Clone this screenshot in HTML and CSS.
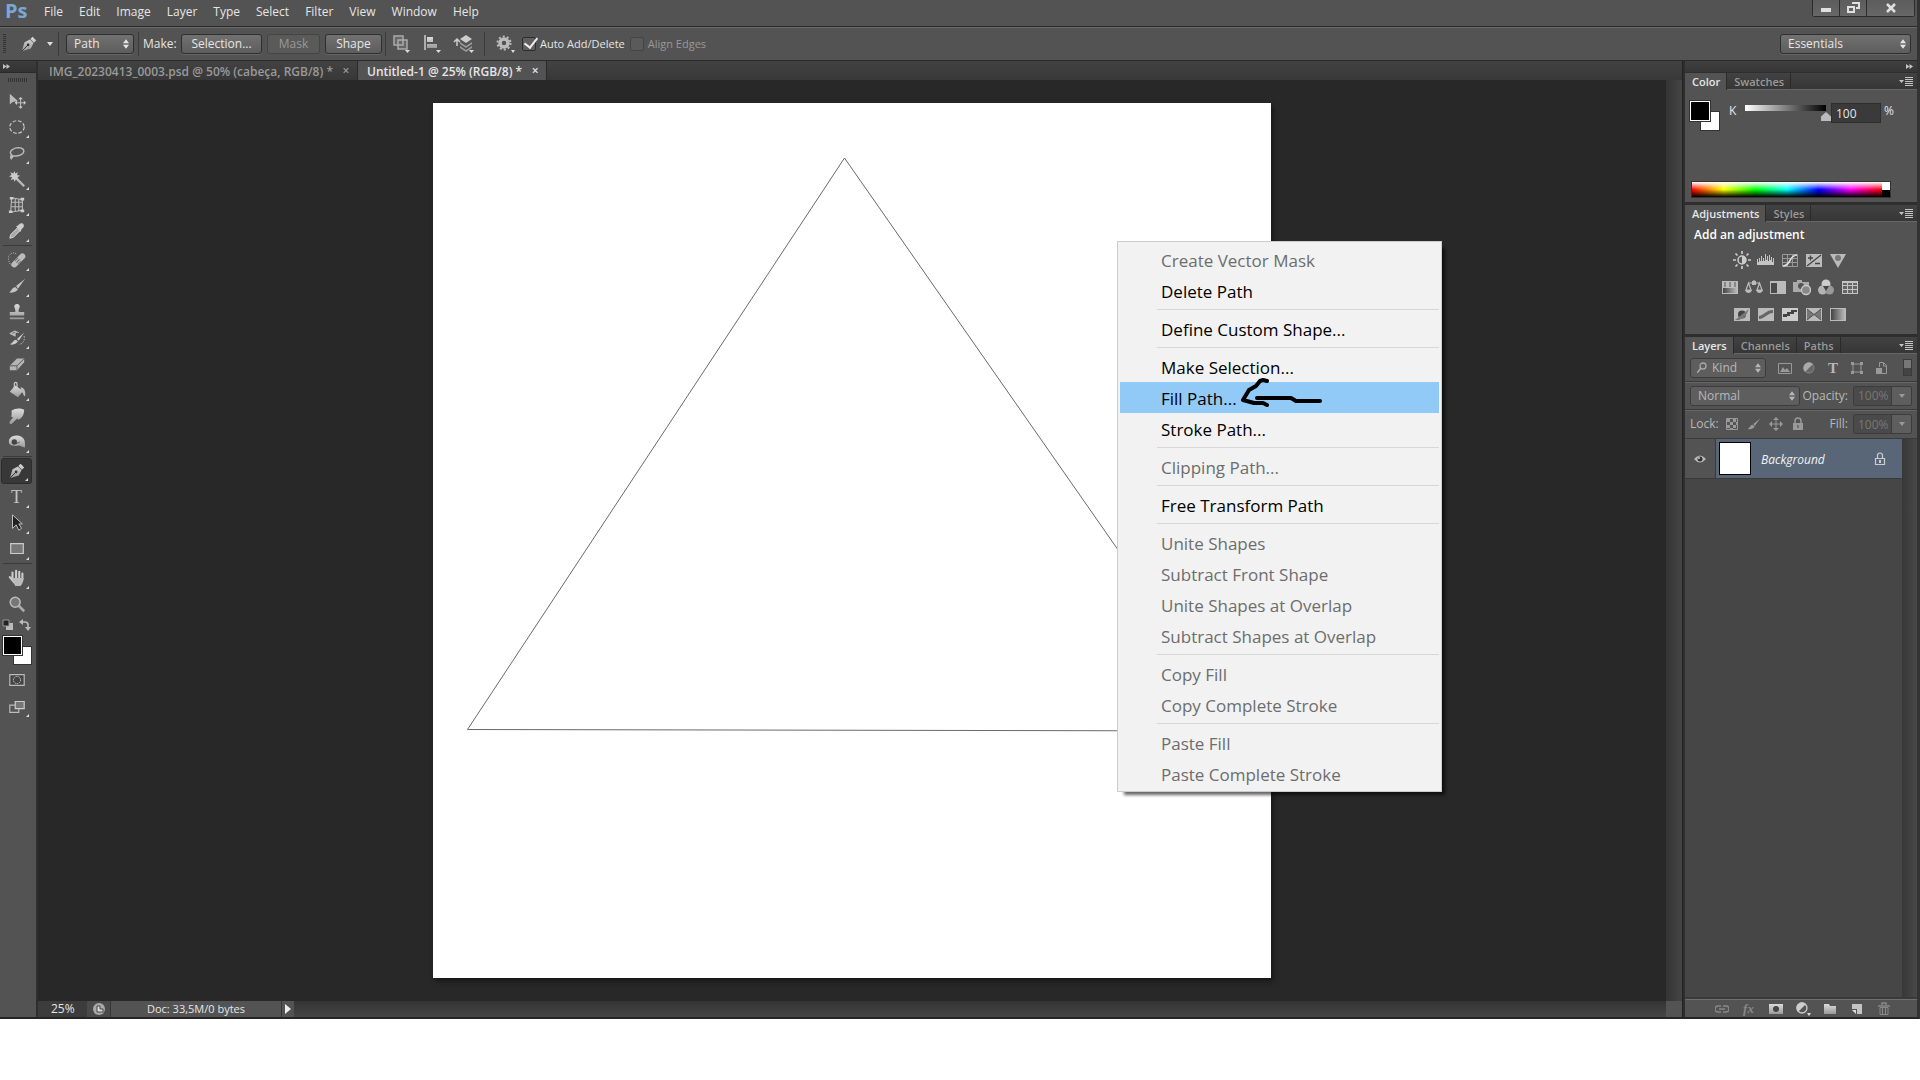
FILE: index.html
```html
<!DOCTYPE html>
<html lang="en">
<head>
<meta charset="utf-8">
<title>Ps - Untitled-1</title>
<link rel="stylesheet" href="styles.css">
</head>
<body>
<svg class="defs" aria-hidden="true">
  <defs>
    <linearGradient id="metal" x1="0" y1="0" x2="0" y2="1"><stop offset="0" stop-color="#dcdcdc"/><stop offset="1" stop-color="#999"/></linearGradient>
    <linearGradient id="dim" x1="0" y1="0" x2="1" y2="0"><stop offset="0" stop-color="#444"/><stop offset="1" stop-color="#bbb"/></linearGradient>
    <symbol id="updown" viewBox="0 0 7 11"><path d="M0 4.5 3.5 0 7 4.5zM0 6.5h7L3.5 11z" fill="currentColor"/></symbol>
    <symbol id="pen" viewBox="0 0 20 20"><path d="M2 18 5 8l6-3 4 4-3 6zM11.5 4.500 14 2l4 4-2.500 2.500z" fill="url(#metal)"/><path d="m2 18 6-6" stroke="#333"/><circle cx="9" cy="11" r="1.500" fill="#333"/></symbol>
    <symbol id="brush" viewBox="0 0 20 20"><path d="M19 2 9 10l2 3zM8 11l3 3c-2 3-6 4-10 3 3-1 3-5 7-6z" fill="currentColor"/></symbol>
    <symbol id="menuicon" viewBox="0 0 14 9"><path d="M0 3h5L2.500 6zM6 0h8v1H6zM6 2h8v1H6zM6 4h8v1H6zM6 6h8v1H6zM6 8h8v1H6z" fill="#c4c4c4"/></symbol>
    <symbol id="chev" viewBox="0 0 7 5"><path d="M0 0 3.500 2.500 0 5zM3.500 0 7 2.500 3.500 5z" fill="#c4c4c4"/></symbol>
    <symbol id="lock" viewBox="0 0 12 14"><path d="M3 6V4a3 3 0 0 1 6 0v2" fill="none" stroke="currentColor" stroke-width="1.500"/><path d="M1 6h10v7H1z" fill="currentColor"/><path d="M5.500 8h1v3h-1z" fill="#444"/></symbol>
  </defs>
</svg>
<div class="app">
  <header class="menubar">
    <span class="logo">Ps</span>
    <nav class="menus">
      <button>File</button><button>Edit</button><button>Image</button><button>Layer</button><button>Type</button><button>Select</button><button>Filter</button><button>View</button><button>Window</button><button>Help</button>
    </nav>
    <div class="winctl">
      <button aria-label="Minimize"><svg width="10" height="10"><path d="M0 5h10v4H0z" fill="#e0e0e0"/></svg></button>
      <button aria-label="Restore"><svg width="13" height="11"><path d="M5 1h7v5H9M1 5h6v5H1z" fill="none" stroke="#e0e0e0" stroke-width="2"/></svg></button>
      <button class="close" aria-label="Close"><svg width="10" height="10"><path d="m1 1 8 8M9 1 1 9" stroke="#e0e0e0" stroke-width="2.500"/></svg></button>
    </div>
  </header>

  <div class="options">
    <i class="grip-v"></i>
    <button class="plain preset" aria-label="Pen tool"><svg width="18" height="18"><use href="#pen"/></svg><svg width="6" height="4"><path d="M0 0h6L3 4z" fill="#ddd"/></svg></button>
    <i class="vsep"></i>
    <span class="select mode"><select aria-label="Tool mode"><option>Path</option></select><svg width="6" height="10"><use href="#updown"/></svg></span>
    <i class="vsep"></i>
    <span class="make">Make:</span>
    <button class="btn selection">Selection...</button>
    <button class="btn mask" disabled>Mask</button>
    <button class="btn shape">Shape</button>
    <i class="vsep tight"></i>
    <button class="plain op" aria-label="Path operations"><svg width="20" height="18"><path d="M2 1h9v4h4v9H6v-4H2z" fill="#666"/><path d="M2 1h9v9H2zM6 5h9v9H6z" fill="none" stroke="#aaa" stroke-width="1.500"/><path d="M13 15h5l-2.500 3z" fill="#ddd"/></svg></button>
    <button class="plain op" aria-label="Path alignment"><svg width="20" height="18"><path d="M2 0v15" stroke="#ccc" stroke-width="1.500"/><path d="M4 2h6v5H4zM4 9h10v4H4z" fill="url(#metal)"/><path d="M13 15h5l-2.500 3z" fill="#ddd"/></svg></button>
    <button class="plain op" aria-label="Path arrangement"><svg width="22" height="18"><path d="M4 11V5M1 7l3-3 3 3" fill="none" stroke="#ccc" stroke-width="1.500"/><path d="m7 4 6-4 6 4-6 4z" fill="#ccc"/><path d="m7 7 6 4 6-4v2l-6 4-6-4zM7 11l6 4 6-4v2l-6 4-6-4z" fill="#999"/><path d="M16 15h5l-2.500 3z" fill="#ddd"/></svg></button>
    <i class="vsep wide"></i>
    <button class="plain gear" aria-label="Options"><svg width="20" height="18"><circle cx="8" cy="8" r="4" fill="none" stroke="#bbb" stroke-width="3.500"/><circle cx="8" cy="8" r="6.500" fill="none" stroke="#bbb" stroke-width="2" stroke-dasharray="2 2.080"/><path d="M15 15h4l-2 3z" fill="#ddd"/></svg></button>
    <label class="check"><input type="checkbox" checked><span>Auto Add/Delete</span></label>
    <label class="check off"><input type="checkbox" disabled><span>Align Edges</span></label>
    <span class="select workspace"><select aria-label="Workspace"><option>Essentials</option></select><svg width="6" height="10"><use href="#updown"/></svg></span>
  </div>

  <main class="work">
    <aside class="tools">
      <div class="tools-head"><svg width="7" height="5"><use href="#chev"/></svg></div>
      <i class="grip-h"></i>
      <button class="tool nofly" aria-label="Move"><svg viewBox="0 0 20 20"><path d="M2 2v12l3-3 6-1z" fill="#bbb"/><path d="M14 7v10M9 12h10" stroke="#ccc" stroke-width="1"/><path d="m14 5.500 2.500 2.500h-5zM14 18.500l2.500-2.500h-5zM7.500 12 10 9.500v5zM20 12l-2.500-2.500v5z" fill="#ccc"/></svg></button>
      <button class="tool" aria-label="Marquee"><svg viewBox="0 0 20 20"><ellipse cx="10" cy="10" rx="8" ry="7" fill="none" stroke="#ccc" stroke-width="1.300" stroke-dasharray="4 2"/></svg></button>
      <button class="tool" aria-label="Lasso"><svg viewBox="0 0 20 20"><path d="M5 13c-6-4 1-9 7-9 9 1 6 8-1 9-4 1-8-1-8 1s3 1 2-1-3 1-1 4" fill="none" stroke="#bbb" stroke-width="1.600"/></svg></button>
      <button class="tool" aria-label="Magic wand"><svg viewBox="0 0 20 20"><path d="m9 9 9 9" stroke="#bbb" stroke-width="2.500"/><path d="m7 1 1.200 3L11 2.500 10 5.500l3.500 1L10.500 8l1.500 3-3-1.200L7.500 13 6 10l-3 1.500L4.500 8 1 7l3-1.500L2.500 2.500 6 4z" fill="#ccc"/></svg></button>
      <button class="tool" aria-label="Perspective crop"><svg viewBox="0 0 20 20"><path d="M4 2 16 4v12L3 18zM8 3v14M12 4v12M4 7h12M4 12h12" fill="none" stroke="#bbb" stroke-width="1.200"/><path d="M2 1h4v3H2zM14 2h4v3h-4zM1 16h4v3H1zM14 15h4v3h-4z" fill="#ccc"/></svg></button>
      <button class="tool" aria-label="Eyedropper"><svg viewBox="0 0 20 20"><path d="m2 18 1-4 7-7 3 3-7 7z" fill="#aaa" stroke="#ddd"/><path d="m9 5 2-1 2-2c3-2 6 1 4 4l-2 2-1 3z" fill="#ccc"/></svg></button>
      <i class="hsep"></i>
      <button class="tool" aria-label="Healing brush"><svg viewBox="0 0 20 20"><path d="M9 3c-5-3-10 2-8 8 1 4 2 5 5 6" fill="none" stroke="#ccc" stroke-dasharray="1 1.500"/><path d="m7 15 9-9" stroke="#bbb" stroke-width="6.500" stroke-linecap="round"/><path d="m9 9 4 4" stroke="#666" stroke-width="5" stroke-dasharray="1 1.500"/></svg></button>
      <button class="tool" aria-label="Brush"><svg viewBox="0 0 20 20"><use href="#brush"/></svg></button>
      <button class="tool" aria-label="Clone stamp"><svg viewBox="0 0 20 20"><path d="M8 10c1-2-1-4-1-6a3 3 0 0 1 6 0c0 2-2 4-1 6h6v4H2v-4zM2 16h16v2H2z" fill="url(#metal)"/></svg></button>
      <button class="tool" aria-label="History brush"><svg viewBox="0 0 20 20"><path d="M18 4 10 11l2 2zM9 12l2 2c-2 3-5 4-9 3 3-1 4-5 7-5z" fill="#ccc"/><path d="M12 4C8 2 6 3 4 5M2 5l6-3v6z" fill="#bbb" stroke="#bbb"/><path d="M18 8c1 5-2 9-6 9" fill="none" stroke="#ccc" stroke-dasharray="1.500 1.500"/></svg></button>
      <button class="tool" aria-label="Eraser"><svg viewBox="0 0 20 20"><path d="m2 12 8-8h8v4l-8 9H2z" fill="#b4b4b4"/><path d="M2 12h8l8-8M10 12v5" fill="none" stroke="#555"/></svg></button>
      <button class="tool" aria-label="Paint bucket"><svg viewBox="0 0 20 20"><path d="m8 5 9 6-6 7-9-6z" fill="url(#metal)"/><path d="M7 9V3c0-2 3-2 3 0v6" fill="none" stroke="#ccc" stroke-width="1.300"/><path d="M14 7c4 0 6 5 5 10-2 0-2-4-4-5z" fill="#bbb"/></svg></button>
      <button class="tool" aria-label="Smudge"><svg viewBox="0 0 20 20"><path d="M4 4c4-3 10-3 14-1 0 5-2 9-6 11-2 0-2-1-1-2l-7 7c-2 0-3-1-2-3l4-5c-2 1-3 0-2-2z" fill="url(#metal)"/></svg></button>
      <button class="tool" aria-label="Burn"><svg viewBox="0 0 20 20"><path d="M2 6c3-4 10-4 14-1 3 2 3 6 3 11-3 0-5-2-7-2-5 1-11 0-11-4 0-2 0-3 1-4z" fill="url(#metal)"/><circle cx="7" cy="10" r="3" fill="#444"/><path d="m9 12 4-2" stroke="#555"/></svg></button>
      <i class="hsep"></i>
      <button class="tool active" aria-label="Pen"><svg viewBox="0 0 20 20"><use href="#pen"/></svg></button>
      <button class="tool type" aria-label="Type"><span>T</span></button>
      <button class="tool" aria-label="Path selection"><svg viewBox="0 0 20 20"><path d="M5 1v15l4-4 3 6 3-2-3-5h4z" fill="#222" stroke="#ccc"/></svg></button>
      <button class="tool" aria-label="Rectangle"><svg viewBox="0 0 20 20"><path d="M3 4h14v11H3z" fill="#777" stroke="#ccc" stroke-width="1.300"/></svg></button>
      <i class="hsep"></i>
      <button class="tool" aria-label="Hand"><svg viewBox="0 0 20 20"><path d="M5 12V4M9 11V2M12.500 11V3M16 12V5M2 9l5 6" stroke="#ccc" stroke-width="2.300" stroke-linecap="round"/><path d="M4 10h13.200c0 4-1.200 6-3.200 9H8z" fill="#bbb"/></svg></button>
      <button class="tool nofly" aria-label="Zoom"><svg viewBox="0 0 20 20"><path d="m11 11 7 7" stroke="#aaa" stroke-width="3"/><circle cx="8" cy="8" r="5.500" fill="#777" stroke="#bbb" stroke-width="1.700"/></svg></button>
      <div class="mini">
        <button class="plain" aria-label="Default colors"><svg width="12" height="12"><path d="M4 4h7v7H4z" fill="#bbb"/><path d="M1 1h6v6H1z" fill="#222" stroke="#999"/></svg></button>
        <button class="plain" aria-label="Swap colors"><svg width="12" height="12"><path d="M3 3h3q3 0 3 3v3" fill="none" stroke="#bbb" stroke-width="1.500"/><path d="M0 3l4-3v6zM6 8h6l-3 4z" fill="#bbb"/></svg></button>
      </div>
      <div class="swatch big"><i class="back"></i><i class="fore"></i></div>
      <button class="tool nofly" aria-label="Quick mask"><svg viewBox="0 0 20 20"><path d="M2 4h16v12H2z" fill="#444" stroke="#bbb" stroke-width="1.300"/><circle cx="10" cy="10" r="4" fill="none" stroke="#ddd" stroke-dasharray="1.500 1"/></svg></button>
      <button class="tool" aria-label="Screen mode"><svg viewBox="0 0 20 20"><path d="M2 9h10v8H2z" fill="#555" stroke="#bbb" stroke-width="1.300"/><path d="M8 5h10v8H8z" fill="#777" stroke="#ccc" stroke-width="1.300"/></svg></button>
    </aside>

    <section class="docs">
      <div class="doctabs">
        <div class="doctab"><a href="#doc1">IMG_20230413_0003.psd @ 50% (cabeça, RGB/8) *</a><button class="plain" aria-label="Close tab">×</button></div>
        <div class="doctab current"><a href="#doc2">Untitled-1 @ 25% (RGB/8) *</a><button class="plain" aria-label="Close tab">×</button></div>
      </div>
      <div class="stage">
        <div class="pasteboard">
          <svg class="sheet" viewBox="0 0 838 875"><path d="M0 0h838v875H0z" fill="#fff"/><path d="M411.500 55 34.500 626.500l777 1.500z" fill="none" stroke="#6a6a6a"/></svg>
        </div>
        <div class="vscroll"></div>
      </div>
      <footer class="status">
        <input class="zoomval" aria-label="Zoom" value="25%">
        <button class="share" aria-label="Share"><svg width="14" height="14"><circle cx="7" cy="7" r="6" fill="#aaa"/><path d="M5 10V4h3v3h3v3z" fill="#ddd" stroke="#444"/></svg></button>
        <span class="docsize">Doc: 33,5M/0 bytes</span>
        <button class="more" aria-label="Status menu"><svg width="6" height="10"><path d="M0 0v10l6-5z" fill="#eee"/></svg></button>
        <div class="hscroll"></div>
        <i class="corner"></i>
      </footer>
    </section>

    <aside class="dock">
      <div class="dock-head"><svg width="7" height="5"><use href="#chev"/></svg></div>
      <section class="panel color">
        <div class="ptabs"><button class="on">Color</button><button>Swatches</button><svg width="14" height="9"><use href="#menuicon"/></svg></div>
        <div class="color-body">
          <div class="crow">
            <div class="swatch small"><i class="back"></i><i class="fore"></i></div>
            <label for="k">K</label>
            <input id="k" type="range" min="0" max="100" value="100">
            <input class="field kval" aria-label="K value" value="100">
            <span>%</span>
          </div>
          <div class="ramp"><i class="hues"></i><i class="bw"></i></div>
        </div>
      </section>
      <section class="panel adjust">
        <div class="ptabs"><button class="on">Adjustments</button><button>Styles</button><svg width="14" height="9"><use href="#menuicon"/></svg></div>
        <div class="adj-body">
          <h2>Add an adjustment</h2>
          <div class="arow">
            <svg viewBox="0 0 18 18"><circle cx="9" cy="9" r="4" fill="#555" stroke="#ccc" stroke-width="1.500"/><path d="M9 5a4 4 0 0 1 0 8z" fill="#ccc"/><path d="M9 0v3M9 15v3M0 9h3M15 9h3M2.500 2.500l2 2M13.500 13.500l2 2M2.500 15.500l2-2M13.500 4.500l2-2" stroke="#ccc" stroke-width="1.700"/></svg>
            <svg viewBox="0 0 18 18"><path d="M0 14V8h1v3h1V7h1v3h1V5h1v5h1V7h1v3h1V3h1v6h1V5h1v5h1V4h1v5h1V6h1v5h1V7h1v7z" fill="#c4c4c4"/></svg>
            <svg viewBox="0 0 18 18"><path d="M1.500 3.500h15v12h-15zM6.500 3v13M11.500 3v13M1 7.500h16M1 11.500h16" fill="none" stroke="#999"/><path d="M2 15C10 15 8 4 16 4" fill="none" stroke="#ddd" stroke-width="1.600"/></svg>
            <svg viewBox="0 0 18 18"><path d="M1 3h16v13H1z" fill="#bbb"/><path d="m2 15 14-11M3 7h5M5.500 4.500v5M10 12.500h5" stroke="#444" stroke-width="1.300"/></svg>
            <svg viewBox="0 0 18 18"><path d="M1 3h16L9 17z" fill="#bbb"/><circle cx="9" cy="7" r="3" fill="#777"/></svg>
          </div>
          <div class="arow">
            <svg viewBox="0 0 18 18"><path d="M1 3h16v13H1z" fill="#bbb"/><path d="M3 4h2v5H3zM8 4h2v5H8zM13 4h2v5h-2z" fill="#888"/><path d="M2 10h14v5H2z" fill="url(#dim)"/></svg>
            <svg viewBox="0 0 18 18"><path d="M3 5h12M9 2v5M3.500 5 1 12h5zM14.500 5 12 12h5z" fill="none" stroke="#bbb" stroke-width="1.200"/><path d="M0 12h7q-1 3-3.500 3T0 12zM11 12h7q-1 3-3.500 3T11 12zM7 3h4v4H7z" fill="#bbb"/></svg>
            <svg viewBox="0 0 18 18"><path d="M1 3h16v13H1z" fill="#bbb"/><path d="M2 5h6v10H2z" fill="#4a4a4a"/></svg>
            <svg viewBox="0 0 18 18"><path d="M0 4h4V2h5v2h7v10H0z" fill="#aaa"/><circle cx="8" cy="8" r="3" fill="#555"/><circle cx="13" cy="12" r="4.500" fill="#888" stroke="#ccc" stroke-width="1.300"/></svg>
            <svg viewBox="0 0 18 18"><circle cx="9" cy="6" r="4.500" fill="#ccc"/><circle cx="5.500" cy="12" r="4.500" fill="#b4b4b4"/><circle cx="12.500" cy="12" r="4.500" fill="#999"/><path d="M6 8h6l-3 5z" fill="#444"/></svg>
            <svg viewBox="0 0 18 18"><path d="M1 3h16v13H1z" fill="#c4c4c4"/><path d="M2 5h4v2H2zM7 5h4v2H7zM12 5h4v2h-4zM2 8h4v3H2zM7 8h4v3H7zM12 8h4v3h-4zM2 12h4v3H2zM7 12h4v3H7zM12 12h4v3h-4z" fill="#666"/></svg>
          </div>
          <div class="arow">
            <svg viewBox="0 0 18 18"><path d="M1 3h16v13H1z" fill="#bbb"/><circle cx="9" cy="9.500" r="4" fill="#444"/><path d="m2 15 14-11-4 8-6 3z" fill="#777"/></svg>
            <svg viewBox="0 0 18 18"><path d="M1 3h16v13H1z" fill="#bbb"/><path d="M2 11c5-1 7-6 14-6v3c-6 0-8 6-14 6z" fill="#666"/></svg>
            <svg viewBox="0 0 18 18"><path d="M1 3h16v13H1z" fill="#ccc"/><path d="M2 9h4V7h4V5h6v2h-3v2H9v2H6v1H2z" fill="#444"/></svg>
            <svg viewBox="0 0 18 18"><path d="M1 3h16v13H1z" fill="#bbb"/><path d="M2 4l7 5.500L2 15zM16 4 9 9.500l7 5.500z" fill="#777"/><path d="m2 4 14 11M16 4 2 15" stroke="#444" stroke-width=".8"/></svg>
            <svg viewBox="0 0 18 18"><path d="M1 3h16v13H1z" fill="#bbb"/><path d="M2 4h14v11H2z" fill="url(#dim)"/></svg>
          </div>
        </div>
      </section>
      <section class="panel layers">
        <div class="ptabs"><button class="on">Layers</button><button>Channels</button><button>Paths</button><svg width="14" height="9"><use href="#menuicon"/></svg></div>
        <div class="lrow filters">
          <span class="select kind"><svg class="lens" width="10" height="11"><circle cx="6" cy="4" r="3" fill="none" stroke="#aaa" stroke-width="1.300"/><path d="m4 6-4 5" stroke="#aaa" stroke-width="1.500"/></svg><select aria-label="Filter kind"><option>Kind</option></select><svg width="6" height="10"><use href="#updown"/></svg></span>
          <div class="ficons">
            <svg viewBox="0 0 14 14"><path d="M.5 2.500h13v10H.5z" fill="none" stroke="#999"/><path d="m2 11 3-5 2 3 2-2 3 4z" fill="#999"/></svg>
            <svg viewBox="0 0 14 14"><circle cx="7" cy="7" r="5" fill="#666" stroke="#888"/><path d="M3 11A5 5 0 0 1 11 3z" fill="#aaa"/></svg>
            <span class="tglyph">T</span>
            <svg viewBox="0 0 14 14"><path d="M3 3h8v8H3z" fill="none" stroke="#999"/><path d="M1 1h3v3H1zM10 1h3v3h-3zM1 10h3v3H1zM10 10h3v3h-3z" fill="#999"/></svg>
            <svg viewBox="0 0 14 14"><path d="M5.500 6V1.500h4l3 3v8H8M9.500 2v3h3" fill="none" stroke="#999"/><path d="M2 7h6v6H2z" fill="#999"/></svg>
          </div>
          <button class="toggle" aria-label="Layer filtering"></button>
        </div>
        <div class="lrow blend">
          <span class="select normal"><select aria-label="Blend mode"><option>Normal</option></select><svg width="6" height="10"><use href="#updown"/></svg></span>
          <label for="op">Opacity:</label>
          <span class="combo"><input id="op" class="field" value="100%" disabled><button aria-label="Opacity slider" disabled><svg width="6" height="4"><path d="M0 0h6L3 4z" fill="#999"/></svg></button></span>
        </div>
        <div class="lrow locks">
          <span>Lock:</span>
          <div class="licons">
            <svg viewBox="0 0 14 14"><path d="M1.500 1.500h11v11h-11z" fill="#555" stroke="#999"/><path d="M2 2h3v3H2zM8 2h3v3H8zM5 5h3v3H5zM2 8h3v3H2zM8 8h3v3H8zM11 5h2v3h-2zM5 11h3v2H5z" fill="#999"/></svg>
            <svg viewBox="0 0 20 20"><use href="#brush"/></svg>
            <svg viewBox="0 0 14 14"><path d="M7 2v10M2 7h10" stroke="#999"/><path d="m7 0 3 3H4zM7 14l3-3H4zM0 7l3-3v6zM14 7l-3-3v6z" fill="#999"/></svg>
            <svg viewBox="0 0 12 14"><use href="#lock"/></svg>
          </div>
          <label for="fill">Fill:</label>
          <span class="combo"><input id="fill" class="field" value="100%" disabled><button aria-label="Fill slider" disabled><svg width="6" height="4"><path d="M0 0h6L3 4z" fill="#999"/></svg></button></span>
        </div>
        <div class="list">
          <div class="rows">
            <div class="layer">
              <button class="eye" aria-label="Visibility"><svg width="12" height="8"><path d="M0 4q6-7 12 0-6 7-12 0z" fill="#bbb"/><circle cx="6" cy="4" r="2.500" fill="#333"/><circle cx="5" cy="3" r="1" fill="#ccc"/></svg></button>
              <i class="thumb"></i><em>Background</em>
              <svg class="llock" width="12" height="14"><path d="M3.500 6V3.500a2.500 2.500 0 0 1 5 0V6M1.500 6.500h9v6h-9z" fill="none" stroke="#ccc" stroke-width="1.200"/><path d="M5 8h2v3H5z" fill="#ccc"/></svg>
            </div>
          </div>
          <div class="lscroll"></div>
        </div>
        <div class="lfoot">
          <button class="plain" aria-label="Link layers"><svg width="14" height="14"><path d="M6 4H3a3 3 0 0 0 0 6h3M8 4h3a3 3 0 0 1 0 6H8M4 7h6" fill="none" stroke="#888" stroke-width="1.500"/></svg></button>
          <button class="plain fx" aria-label="Layer style">fx</button>
          <button class="plain" aria-label="Add mask"><svg width="14" height="14"><path d="M0 2h14v10H0z" fill="url(#metal)"/><circle cx="7" cy="7" r="3" fill="#444"/></svg></button>
          <button class="plain" aria-label="New adjustment"><svg width="16" height="14"><circle cx="7" cy="6" r="5" fill="#555" stroke="#ccc" stroke-width="1.300"/><path d="M3 10A5 5 0 0 1 11 2z" fill="#ccc"/><path d="M12 11h4l-2 3z" fill="#ddd"/></svg></button>
          <button class="plain" aria-label="New group"><svg width="14" height="14"><path d="M1 2h5l1 2h6v8H1z" fill="url(#metal)"/></svg></button>
          <button class="plain" aria-label="New layer"><svg width="14" height="14"><path d="M2 2h10v10H7V7H2z" fill="#c4c4c4"/><path d="M2 8h4v4z" fill="#ddd"/></svg></button>
          <button class="plain" aria-label="Delete layer"><svg width="14" height="14"><path d="M1 4h12M5 3V1h4v2" fill="none" stroke="#888" stroke-width="1.500"/><path d="M3 5.500h8v7H3zM5.500 5v7M8.500 5v7" fill="none" stroke="#888"/></svg></button>
        </div>
      </section>
    </aside>
  </main>

  <div class="ctx" role="menu">
    <button disabled>Create Vector Mask</button>
    <button>Delete Path</button>
    <hr>
    <button>Define Custom Shape...</button>
    <hr>
    <button>Make Selection...</button>
    <button class="hot">Fill Path...<svg class="scribble" width="84" height="30"><path d="M28 4l-4-1-3 1-4 5-7 4-6 10 11 3 9 0 4 2M18 21h34l5 3h24" fill="none" stroke="#000" stroke-width="4" stroke-linecap="round" stroke-linejoin="round"/></svg></button>
    <button>Stroke Path...</button>
    <hr>
    <button disabled>Clipping Path...</button>
    <hr>
    <button>Free Transform Path</button>
    <hr>
    <button disabled>Unite Shapes</button>
    <button disabled>Subtract Front Shape</button>
    <button disabled>Unite Shapes at Overlap</button>
    <button disabled>Subtract Shapes at Overlap</button>
    <hr>
    <button disabled>Copy Fill</button>
    <button disabled>Copy Complete Stroke</button>
    <hr>
    <button disabled>Paste Fill</button>
    <button disabled>Paste Complete Stroke</button>
  </div>
</div>
</body>
</html>
```
FILE: styles.css
```css
* { box-sizing: border-box; }
body {
  margin: 0;
  height: 100vh;
  padding-bottom: 61px;
  background: #fff;
  color: #e6e6e6;
  font: 12px/16px "Open Sans", "Noto Sans", sans-serif;
  overflow: hidden;
}
button, input, select { font: inherit; color: inherit; margin: 0; padding: 0; border: 0; background: none; border-radius: 0; }
a { color: inherit; text-decoration: none; }
svg { display: block; flex: none; }
.defs { position: absolute; width: 0; height: 0; }
.plain { display: flex; align-items: center; justify-content: center; }

.app {
  position: relative;
  display: flex;
  flex-direction: column;
  height: 100%;
  background: #535353;
  border-right: 3px solid #333;
  border-bottom: 2px solid #252525;
}

/* menu bar */
.menubar { display: flex; height: 27px; border-bottom: 1px solid #2a2a2a; flex: none; }
.logo { width: 36px; padding-left: 5px; font: bold 20px/22px "Open Sans", sans-serif; color: #7ba7d7; }
.menus { display: flex; gap: 16px; padding: 0 8px; height: 24px; }
.winctl { display: flex; margin-left: auto; margin-right: 2px; height: 17px; border: 1px solid #2c2c2c; border-top: 0; border-radius: 0 0 3px 3px; }
.winctl button { width: 27px; display: flex; align-items: center; justify-content: center; padding-bottom: 1px; background: linear-gradient(#5c5c5c, #676767); border-right: 1px solid #2c2c2c; }
.winctl .close { width: 47px; border: 0; }

/* options bar */
.options { display: flex; align-items: center; height: 34px; flex: none; border-top: 1px solid #6a6a6a; border-bottom: 1px solid #2a2a2a; padding: 0 6px 0 3px; }
.grip-v { width: 3px; height: 20px; background: repeating-linear-gradient(#333 0 1px, #535353 1px 2px); }
.preset { width: 52px; gap: 9px; padding-left: 8px; }
.vsep { width: 1px; height: 24px; background: #3a3a3a; margin-right: 4px; }
.preset + .vsep { margin-right: 7px; }
.vsep.tight { margin-right: 0; }
.vsep.wide { margin: 0 8px 0 5px; }
.select { display: flex; align-items: center; height: 20px; border: 1px solid #2e2e2e; border-radius: 3px; background: linear-gradient(#717171, #5d5d5d); box-shadow: 0 1px 0 #666; padding-right: 4px; }
.select select { appearance: none; flex: 1; width: 10px; padding-left: 7px; height: 18px; outline: 0; }
.mode { width: 68px; margin-right: 4px; }
.make { width: 38px; }
.btn { height: 20px; border: 1px solid #2e2e2e; border-radius: 3px; background: linear-gradient(#717171, #5d5d5d); box-shadow: 0 1px 0 #666; margin-right: 5px; }
.btn:disabled { color: #999; border-color: #444; background: #5a5a5a; box-shadow: none; }
.selection { width: 81px; }
.mask { width: 53px; }
.shape { width: 57px; margin-right: 3px; }
.op { width: 31px; }
.gear { width: 26px; margin-right: 3px; }
.check { display: flex; align-items: center; gap: 4px; margin-right: 5px; font-size: 11px; }
.check.off { color: #999; }
.check input { appearance: none; width: 14px; height: 14px; border: 1px solid #2c2c2c; border-radius: 2px; background: #5f5f5f; }
.check.off input { border-color: #444; background: #5a5a5a; }
.check input:checked::before { content: ""; display: block; width: 6px; height: 11px; margin: -3px 0 0 4px; border: solid #eee; border-width: 0 2px 2px 0; transform: rotate(38deg); }
.workspace { width: 131px; margin-left: auto; }

/* work area */
.work { display: flex; flex: 1; min-height: 0; }
.tools { width: 38px; flex: none; border-right: 2px solid #2e2e2e; display: flex; flex-direction: column; }
.tools-head { height: 12px; background: linear-gradient(#3c3c3c, #333); border-bottom: 1px solid #2a2a2a; padding: 3px 0 0 3px; }
.grip-h { width: 20px; height: 4px; margin: 5px 0 6px 8px; background: repeating-linear-gradient(90deg, #333 0 1px, #535353 1px 2px); }
.tool { position: relative; height: 26px; width: 31px; margin-left: 1px; display: flex; align-items: center; justify-content: center; flex: none; color: #c4c4c4; }
.tool svg { width: 18px; height: 18px; }
.tool:not(.nofly)::after { content: ""; position: absolute; right: 3px; bottom: 2px; width: 3px; height: 3px; background: #ddd; clip-path: polygon(100% 0, 100% 100%, 0 100%); }
.tool.active { background: #383838; border: 1px solid #2c2c2c; border-radius: 3px; }
.tool.type span { font: 18px/20px "Liberation Serif", serif; }
.hsep { height: 1px; margin: 1px 4px 1px 3px; background: #3a3a3a; flex: none; }
.mini { display: flex; justify-content: space-between; padding: 0 5px 2px 2px; height: 18px; flex: none; }
.swatch { position: relative; flex: none; }
.swatch i { position: absolute; width: 20px; height: 20px; border: 1px solid #333; }
.swatch .fore { left: 0; top: 0; background: #000; border: 1px solid #fff; outline: 1px solid #333; }
.swatch .back { right: 0; bottom: 0; background: #fff; }
.swatch.big { width: 29px; height: 29px; margin: 1px 0 2px 3px; }
.swatch.big i { width: 19px; height: 19px; }
.swatch.small { width: 30px; height: 30px; }

.docs { flex: 1; min-width: 0; display: flex; flex-direction: column; border-right: 1px solid #222; }
.doctabs { display: flex; height: 19px; flex: none; background: linear-gradient(#424242, #383838); font-weight: 600; color: #999; }
.doctab { display: flex; align-items: center; gap: 8px; padding: 2px 6px 0 11px; border-right: 1px solid #2a2a2a; white-space: nowrap; }
.doctab button { width: 10px; height: 16px; padding-bottom: 2px; }
.doctab.current { background: #535353; color: #e6e6e6; padding-left: 9px; }
.stage { display: flex; flex: 1; min-height: 0; }
.pasteboard { flex: 1; min-width: 0; background: #282828; display: flex; align-items: center; justify-content: center; }
.sheet { width: 838px; height: 875px; box-shadow: 2px 3px 5px #151515; }
.vscroll { width: 16px; background: linear-gradient(90deg, #343434, #454545); }
.status { display: flex; height: 16px; flex: none; background: #454545; }
.zoomval { width: 49px; padding-left: 13px; background: #3c3c3c; height: 16px; }
.share { width: 24px; display: flex; align-items: center; justify-content: center; background: #4a4a4a; border-right: 1px solid #363636; }
.docsize { width: 171px; text-align: center; font-size: 11px; background: #535353; border-right: 1px solid #363636; }
.more { width: 12px; display: flex; align-items: center; justify-content: center; background: #535353; }
.hscroll { flex: 1; background: linear-gradient(#343434, #454545); }
.corner { width: 16px; background: #535353; }

/* panel dock */
.dock { width: 234px; flex: none; display: flex; flex-direction: column; background: #2e2e2e; padding-left: 2px; }
.dock-head { display: flex; justify-content: flex-end; height: 11px; background: linear-gradient(#404040, #363636); padding: 3px 4px 0 0; margin-bottom: 1px; flex: none; }
.panel { background: #535353; flex: none; margin-bottom: 3px; }
.ptabs { display: flex; height: 17px; background: linear-gradient(#424242, #363636); border-bottom: 1px solid #666; align-items: stretch; }
.ptabs button { padding: 1px 6px 0 7px; color: #999; font-size: 11px; font-weight: 600; border-right: 1px solid #2a2a2a; }
.ptabs .on { background: #535353; color: #e6e6e6; margin-bottom: -1px; }
.ptabs svg { margin: 4px 4px 0 auto; }
.color-body { height: 112px; padding: 11px 5px 0; display: flex; flex-direction: column; justify-content: space-between; }
.crow { display: flex; align-items: flex-start; height: 30px; }
.crow label { width: 8px; margin: 2px 3px 0 9px; }
.crow input[type="range"] { appearance: none; width: 91px; height: 16px; margin: 4px 0 0; }
.crow input[type="range"]::-webkit-slider-runnable-track { height: 16px; background: linear-gradient(90deg, #fff, #000) no-repeat center top / calc(100% - 10px) 6px; }
.crow input[type="range"]::-webkit-slider-thumb { appearance: none; width: 10px; height: 9px; margin-top: 7px; background: #bbb; clip-path: polygon(50% 0, 100% 50%, 100% 100%, 0 100%, 0 50%); }
.field { height: 20px; background: #3a3a3a; border: 1px solid #2e2e2e; padding-left: 4px; }
.kval { width: 50px; margin-top: 2px; }
.crow span { padding: 2px 0 0 3px; }
.ramp { display: flex; width: 200px; height: 17px; margin: 0 0 4px 1px; border: 1px solid #333; }
.hues { flex: 1; background: linear-gradient(#fff, transparent 50%, #000), linear-gradient(90deg, red, yellow, lime, cyan, blue, magenta, red); }
.bw { width: 8px; background: linear-gradient(#fff 50%, #000 50%); }
.adj-body { height: 112px; padding: 4px 22px 0 0; }
.adj-body h2 { margin: 0 0 7px 9px; font-size: 12px; font-weight: 600; line-height: 18px; color: #fff; }
.arow { display: flex; justify-content: center; gap: 6px; height: 27px; }
.arow svg { width: 18px; height: 18px; }

.layers { flex: 1; min-height: 0; display: flex; flex-direction: column; margin: 0; color: #b8b8b8; }
.layers .ptabs { flex: none; }
.lrow { display: flex; align-items: center; height: 28px; padding: 0 5px; flex: none; border-bottom: 1px solid #3a3a3a; box-shadow: 0 1px 0 #666; }
.layers .select, .combo { border-color: #3c3c3c; background: #5e5e5e; box-shadow: none; }
.kind { width: 76px; }
.lens { margin-left: 6px; }
.kind select { padding-left: 5px; }
.ficons { display: flex; gap: 10px; margin-left: 12px; }
.ficons svg, .tglyph { width: 14px; height: 14px; }
.tglyph { font: bold 15px/14px "Liberation Serif", serif; text-align: center; }
.toggle { width: 9px; height: 17px; margin-left: auto; background: linear-gradient(#777 50%, #444 50%); border: 1px solid #3a3a3a; }
.normal { width: 110px; }
.lrow label { margin-left: auto; margin-right: 5px; }
.combo { display: flex; width: 59px; height: 20px; border: 1px solid #3c3c3c; border-radius: 2px; }
.combo .field { width: 38px; height: 18px; border: 0; border-right: 1px solid #3c3c3c; background: #4a4a4a; color: #777; }
.combo button { flex: 1; display: flex; align-items: center; justify-content: center; }
.locks { height: 29px; }
.licons { display: flex; gap: 8px; margin-left: 6px; color: #999; }
.licons svg { width: 14px; height: 14px; }
.list { flex: 1; display: flex; min-height: 0; background: #464646; border-bottom: 2px solid #3a3a3a; }
.rows { flex: 1; }
.lscroll { width: 15px; background: linear-gradient(90deg, #383838, #484848); }
.layer { display: flex; align-items: center; height: 40px; background: #596678; color: #f2f2f2; border-bottom: 1px solid #3a3a3a; }
.eye { width: 31px; height: 39px; background: #535353; border-right: 1px solid #3a3a3a; display: flex; align-items: center; justify-content: center; }
.thumb { width: 32px; height: 33px; margin: 0 10px 0 3px; background: #fff; border: 1px solid #000; }
.layer em { flex: 1; padding-top: 2px; }
.llock { margin-right: 16px; }
.lfoot { display: flex; align-items: center; height: 18px; flex: none; border-top: 1px solid #707070; padding-left: 23px; }
.lfoot button { width: 27px; height: 16px; }
.lfoot .fx { color: #888; font: italic bold 13px/14px "Liberation Serif", serif; }

/* context menu */
.ctx { position: absolute; left: 1117px; top: 241px; width: 325px; padding: 2px; border: 1px solid #ccc; background: #f2f2f2; color: #000; box-shadow: 5px 5px 3px -2px rgba(0, 0, 0, .6); font-size: 17px; line-height: 29px; }
.ctx button { display: block; position: relative; width: 100%; height: 31px; padding: 2px 0 0 41px; text-align: left; white-space: nowrap; }
.ctx button:disabled { color: #6d6d6d; }
.ctx .hot { background: #91c9f7; }
.ctx hr { height: 1px; margin: 3px 0 3px 37px; border: 0; background: #d7d7d7; }
.scribble { position: absolute; left: 119px; top: -5px; z-index: 1; }
```
